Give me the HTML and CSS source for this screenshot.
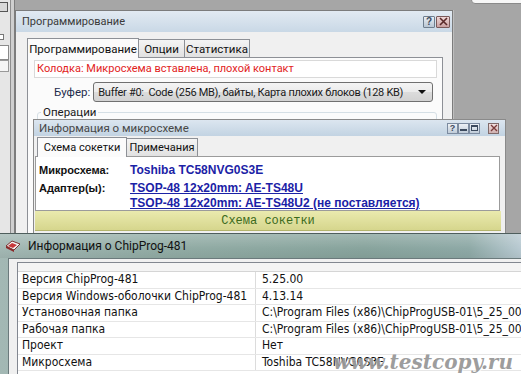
FILE: index.html
```html
<!DOCTYPE html>
<html lang="ru">
<head>
<meta charset="utf-8">
<title>ChipProg</title>
<link rel="stylesheet" href="styles.css">
</head>
<body>
<div class="desk">
  <div class="bgwin">
    <div class="bg-ico"></div>
    <div class="bg-box"></div>
    <div class="bg-edit"></div>
    <div class="bg-box2"></div>
  </div>
  <div class="topwin"></div>

  <div class="win w1">
    <div class="title t1">
      <span>Программирование</span>
      <div class="btns">
        <span class="b b-help">?</span><span class="b b-close"><svg width="9" height="9" viewBox="0 0 9 9"><path d="M1 1L8 8M8 1L1 8" stroke="#5a2a2a" stroke-width="1.6"/></svg></span>
      </div>
    </div>
    <div class="body1">
      <div class="tabs">
        <div class="tab sel tw-prog">Программирование</div>
        <div class="tab tw-opt">Опции</div>
        <div class="tab tw-stat">Статистика</div>
      </div>
      <div class="panel">
        <div class="status">Колодка: Микросхема вставлена, плохой контакт</div>
        <div class="bufrow">
          <span class="lbl">Буфер:</span>
          <div class="combo"><span class="ctext">Buffer #0:&nbsp; Code (256 MB), байты, Карта плохих блоков (128 KB)</span><span class="arrow"></span></div>
        </div>
        <div class="ops"><span class="legend">Операции</span></div>
      </div>
    </div>
  </div>

  <div class="win w2">
    <div class="title t2">
      <span>Информация о микросхеме</span>
      <div class="btns2">
        <span class="s s-help">?</span><span class="s s-min"><i></i></span><span class="s s-max"><i></i></span><span class="s s-close"><svg width="8" height="8" viewBox="0 0 8 8"><path d="M1 1L7 7M7 1L1 7" stroke="#7a3a3a" stroke-width="1.4"/></svg></span>
      </div>
    </div>
    <div class="tabs2">
      <div class="tab sel tw-sock">Схема сокетки</div>
      <div class="tab tw-note">Примечания</div>
    </div>
    <div class="infobox">
      <div class="irow"><span class="ilbl">Микросхема:</span><span class="ival">Toshiba TC58NVG0S3E</span></div>
      <div class="irow r2"><span class="ilbl">Адаптер(ы):</span><span class="ival link">TSOP-48 12x20mm: AE-TS48U</span></div>
      <div class="irow r3"><span class="ilbl"></span><span class="ival link">TSOP-48 12x20mm: AE-TS48U2 (не поставляется)</span></div>
    </div>
    <div class="ybar">Схема сокетки</div>
  </div>

  <div class="win w3">
    <div class="t3">
      <svg class="ico3" width="18" height="14" viewBox="0 0 18 14">
        <path d="M2 7L8 2L16 5L10 11Z" fill="#f4f4f4" stroke="#7a3030" stroke-width="1"/>
        <path d="M4 7L8 4L13 6L9 9Z" fill="#c8383a"/>
        <path d="M2 7L10 11L10 13L2 9Z" fill="#8a2a2a"/>
      </svg>
      <span>Информация о ChipProg-481</span>
    </div>
    <div class="body3">
      <div class="list">
        <div class="lhead"></div>
        <div class="lrow"><span class="c1">Версия ChipProg-481</span><span class="c2">5.25.00</span></div>
        <div class="lrow"><span class="c1">Версия Windows-оболочки ChipProg-481</span><span class="c2">4.13.14</span></div>
        <div class="lrow"><span class="c1">Установочная папка</span><span class="c2">C:\Program Files (x86)\ChipProgUSB-01\5_25_00</span></div>
        <div class="lrow"><span class="c1">Рабочая папка</span><span class="c2">C:\Program Files (x86)\ChipProgUSB-01\5_25_00</span></div>
        <div class="lrow"><span class="c1">Проект</span><span class="c2">Нет</span></div>
        <div class="lrow"><span class="c1">Микросхема</span><span class="c2">Toshiba TC58NVG0S3E</span></div>
      </div>
    </div>
  </div>

  <div class="wm">www.testcopy.ru</div>
</div>
</body>
</html>
```

FILE: styles.css
```css
* { box-sizing: border-box; margin: 0; padding: 0; }
html, body { margin: 0; width: 521px; height: 374px; overflow: hidden; }
body { font-family: Roboto, "Noto Sans", "DejaVu Sans", sans-serif; color: #1a1a1a; }

.desk { position: relative; width: 521px; height: 374px; overflow: hidden; background: #a6a6a6; }

/* background window at the far left */
.bgwin { position: absolute; left: 0; top: 0; width: 15px; height: 240px; background: #e6e6e6; border-right: 1px solid #7d7d7d; box-shadow: inset -3px 0 0 #cfcfcf, inset -4px 0 0 #8e8e8e; }
.bg-ico { position: absolute; left: 0; top: 2px; width: 8px; height: 10px; background: #d9d9d9; border: 1px solid #555; border-left: none; }
.bg-box { position: absolute; left: 0; top: 34px; width: 4px; height: 6px; border: 1px solid #777; border-left: none; background: #fff; }
.bg-edit { position: absolute; left: 0; top: 45px; width: 9px; height: 15px; border: 1px solid #8a8a8a; border-left: none; background: #fff; }
.bg-box2 { position: absolute; left: 0; top: 60px; width: 9px; height: 12px; border: 1px solid #999; border-left: none; background: #f5f5f5; }

.topwin { position: absolute; left: 471px; top: -8px; width: 60px; height: 12px; background: #f7f7f7; border: 1px solid #8a8a8a; border-radius: 4px; }

.win { position: absolute; background: #f0f0f0; }

/* window 1 */
.w1 { left: 15px; top: 10px; width: 438px; height: 232px; border: 1px solid #7c7c7c; box-shadow: 1px 0 0 #bdbdbd; }
.title { display: flex; align-items: center; justify-content: space-between; }
.t1 { height: 21px; padding: 0 2px 0 6px; background: linear-gradient(#e2eaf2, #c9d8e6); font-size: 11px; color: #3a3a3a; }
.btns { display: flex; gap: 1px; }
.b { width: 12px; height: 12px; display: flex; align-items: center; justify-content: center; border: 1px solid #6f7e8e; border-radius: 1px; font-size: 10px; line-height: 10px; font-family: "Liberation Sans", sans-serif; font-weight: bold; color: #3d4a5c; }
.b-help { background: linear-gradient(#e9eef4, #b9c6d4); }
.b-close { width: 14px; background: linear-gradient(#f0d8d8, #c9a0a0); border-color: #7a5a5a; }

.body1 { padding: 5px 9px 0 11px; }
.tabs { display: flex; align-items: flex-end; height: 20px; }
.tab { height: 18px; border: 1px solid #8d9096; border-bottom: none; background: linear-gradient(#f4f4f4, #e1e1e1); display: flex; align-items: center; justify-content: center; font-size: 11.5px; color: #111; margin-left: -1px; white-space: nowrap; }
.tab.sel { height: 20px; background: #fbfbfb; position: relative; z-index: 1; margin-bottom: -1px; margin-left: 0; }
.tw-prog { width: 112px; }
.tw-opt { width: 47px; }
.tw-stat { width: 66px; }

.panel { border: 1px solid #8d9096; background: #fbfbfb; height: 200px; padding: 2px 5px 0 6px; }
.status { height: 18px; background: #fff; border: 1px solid #d9d9d9; color: #e2231d; font-size: 11px; line-height: 16px; padding-left: 2px; white-space: nowrap; }
.bufrow { display: flex; align-items: center; margin-top: 4px; padding-left: 20px; gap: 3px; }
.lbl { font-size: 11.5px; color: #1e2b4c; }
.combo { width: 340px; height: 20px; border: 1px solid #707070; border-radius: 3px; background: linear-gradient(#f4f4f4 0%, #ebebeb 50%, #dcdcdc 51%, #d2d2d2 100%); display: flex; align-items: center; justify-content: space-between; padding: 0 6px 0 4px; font-size: 11px; letter-spacing: -0.3px; white-space: nowrap; }
.ctext { overflow: hidden; min-width: 0; }
.arrow { flex: none; width: 0; height: 0; border-left: 4px solid transparent; border-right: 4px solid transparent; border-top: 4px solid #111; }
.ops { margin: 10px 0 0 3px; height: 40px; border: 1px solid #d5dfe5; border-radius: 3px; position: relative; }
.legend { position: absolute; left: 3px; top: -9px; padding: 0 2px; background: #fbfbfb; font-size: 11.5px; line-height: 16px; }

/* window 2 */
.w2 { left: 33px; top: 119px; width: 473px; height: 115px; border: 1px solid #8a8a8a; }
.t2 { height: 16px; padding: 0 6px 0 5px; background: linear-gradient(#dce6f0, #c2d3e2); font-size: 11.5px; color: #474747; }
.btns2 { display: flex; }
.s { width: 11px; height: 11px; border: 1px solid #7c8ba0; background: linear-gradient(#edf1f6, #c0ccd9); display: flex; align-items: center; justify-content: center; font-family: "Liberation Sans", sans-serif; font-size: 9px; font-weight: bold; color: #3c4a5e; }
.s-min i { width: 7px; height: 2px; background: #3c4a5e; margin-top: 4px; }
.s-max i { width: 7px; height: 6px; border: 1px solid #3c4a5e; border-top-width: 2px; }
.s-close { margin-left: 8px; background: linear-gradient(#f2e0e0, #cfb0b0); border-color: #806a6a; }

.tabs2 { display: flex; align-items: flex-end; height: 20px; padding-left: 3px; }
.tabs2 .tab { font-size: 11px; }
.tw-sock { width: 90px; }
.tw-note { width: 72px; }
.infobox { margin-left: 1px; width: 465px; height: 55px; border: 1px solid #9b9b9b; background: #fff; padding: 6px 0 0 3px; }
.irow { display: flex; align-items: center; height: 14px; font-family: "Liberation Sans", sans-serif; font-weight: bold; font-size: 12px; }
.r2 { margin-top: 4px; }
.r3 { margin-top: 1px; }
.ilbl { width: 91px; font-size: 11px; color: #111; }
.ival { color: #1b22a6; }
.link { text-decoration: underline; }
.ybar { margin-left: 1px; width: 466px; height: 20px; background: linear-gradient(#eaeaae, #d6d68d); border-bottom: 1px solid #b4b46c; display: flex; align-items: center; justify-content: center; font-family: "Liberation Mono", monospace; font-size: 12px; color: #3b6a1c; }

/* window 3 */
.w3 { left: 0; top: 233px; width: 521px; height: 141px; background: linear-gradient(90deg, #a3b8b4 0%, #92aca5 30%, #88a49d 70%, #8ea9a6 90%, #b9cad2 100%); border-top: 1px solid #4e5e5c; }
.t3 { height: 24px; display: flex; align-items: center; gap: 6px; padding-left: 4px; font-size: 12px; color: #111; background: linear-gradient(rgba(255,255,255,0.22), rgba(255,255,255,0) 60%, rgba(0,0,0,0.05)); }
.ico3 { flex: none; }
.body3 { margin-left: 8px; height: 117px; background: #f0f0f0; border-top: 1px solid #6b7a7c; border-left: 1px solid #6b7a7c; padding: 3px 0 0 8px; }
.list { background: #fff; border: 1px solid #828790; border-right: none; height: 120px; }
.lhead { height: 9px; background: #f4f4f4; border-bottom: 1px solid #d5d5d5; }
.lrow { display: flex; height: 16.5px; border-bottom: 1px solid #e6e6e6; font-family: "DejaVu Sans Condensed", "DejaVu Sans", sans-serif; font-size: 12px; line-height: 15px; white-space: nowrap; color: #111; }
.c1 { width: 238px; flex: none; padding-left: 4px; border-right: 1px solid #dcdcdc; }
.c2 { padding-left: 6px; }

.wm { position: absolute; left: 333px; top: 350px; font-family: "DejaVu Serif", serif; font-weight: bold; font-style: italic; font-size: 20px; color: rgba(140,140,140,0.85); text-shadow: 1px 1px 0 rgba(255,255,255,0.7); white-space: nowrap; }
```
